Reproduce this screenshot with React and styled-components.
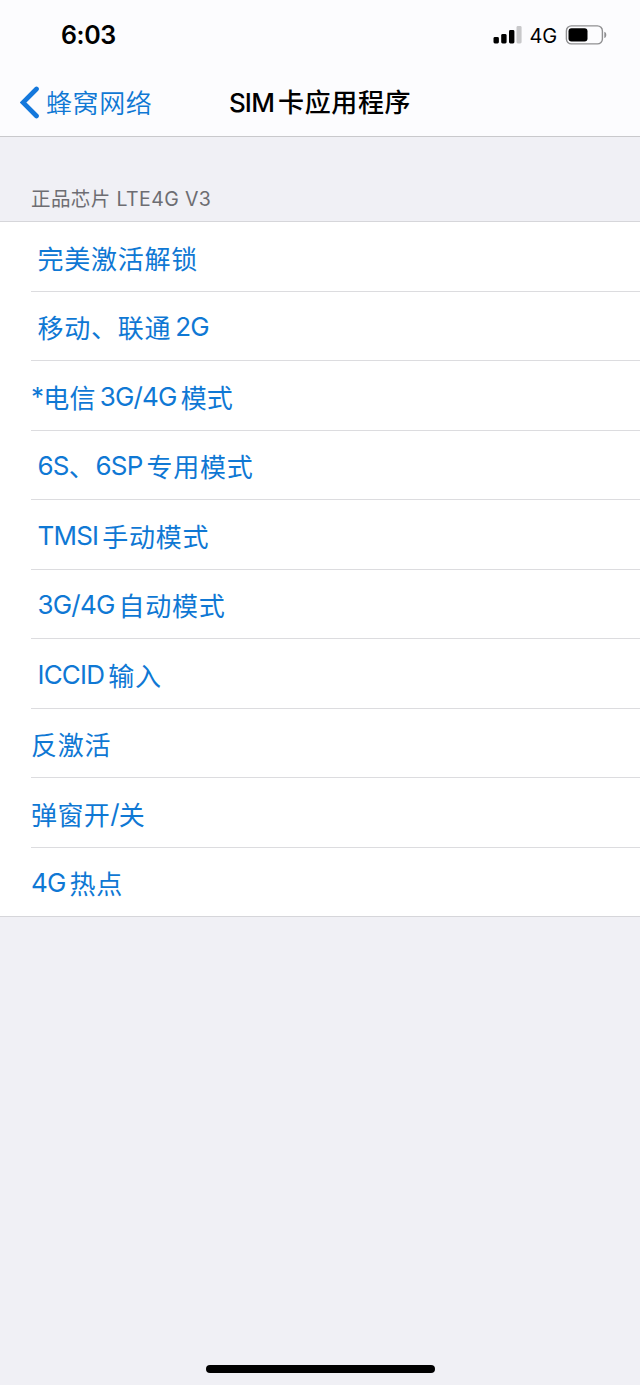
import React from 'react'
import styled, { createGlobalStyle } from 'styled-components'

const ITEMS = [
  { text: '完美激活解锁', indent: true },
  { text: '移动、联通2G', indent: true },
  { text: '*电信3G/4G模式', tracking: 0.2 },
  { text: '6S、6SP专用模式', indent: true },
  { text: 'TMSI手动模式', indent: true },
  { text: '3G/4G自动模式', indent: true },
  { text: 'ICCID输入', indent: true },
  { text: '反激活' },
  { text: '弹窗开/关', tracking: 0.4 },
  { text: '4G热点' },
]

// Latin runs get a little air next to Chinese characters
const MixedText = ({ children }) =>
  children
    .split(/([A-Z0-9*/]+)/)
    .filter(Boolean)
    .map((part, i, all) =>
      /^[A-Z0-9*/]/.test(part) ? (
        <Latin
          key={i}
          $before={i > 0 && /^[A-Z0-9]/.test(part) && !all[i - 1].endsWith('、')}
          $after={
            i < all.length - 1 &&
            /[A-Z0-9]$/.test(part) &&
            !all[i + 1].startsWith('、')
          }
        >
          {part}
        </Latin>
      ) : (
        <React.Fragment key={i}>{part}</React.Fragment>
      )
    )

const App = () => (
  <Screen>
    <GlobalStyle />
    <Header>
      <StatusBar>
        <Time>6:03</Time>
        <Status>
          <SignalIcon />
          <Network>4G</Network>
          <BatteryIcon />
        </Status>
      </StatusBar>
      <NavBar>
        <BackButton>
          <BackIcon />
          <BackLabel>蜂窝网络</BackLabel>
        </BackButton>
        <Title>
          <MixedText>SIM卡应用程序</MixedText>
        </Title>
      </NavBar>
    </Header>
    <SectionTitle>正品芯片 LTE4G V3</SectionTitle>
    <List>
      {ITEMS.map(({ text, indent, tracking }) => (
        <Row key={text} $indent={indent} $tracking={tracking}>
          <MixedText>{text}</MixedText>
        </Row>
      ))}
    </List>
    <Footer>
      <HomeIndicator />
    </Footer>
  </Screen>
)

const SignalIcon = () => (
  <svg width="29" height="20" viewBox="0 0 29 20">
    <rect x="0.5" y="12" width="5.4" height="6.5" rx="1.4" />
    <rect x="8.2" y="9" width="5.4" height="9.5" rx="1.4" />
    <rect x="16" y="5" width="5.4" height="13.5" rx="1.4" />
    <rect x="23.5" y="1" width="5.1" height="17.5" rx="1.4" fill="#c8c8ca" />
  </svg>
)

const BatteryIcon = () => (
  <svg width="42" height="20" viewBox="0 0 42 20">
    <rect
      x="1.4"
      y="0.9"
      width="36"
      height="18"
      rx="5"
      fill="none"
      stroke="#8f8f91"
      strokeWidth="1.4"
    />
    <rect x="3.500" y="3.2" width="19" height="13.4" rx="3" />
    <path d="M39.300 6.800c1.200.3 2 1.500 2 3.100s-.8 2.800-2 3.100z" fill="#8f8f91" />
  </svg>
)

const BackIcon = () => (
  <svg width="20" height="34" viewBox="0 0 20 34">
    <path
      d="M16.500 3 3 16.500l13.500 13.500"
      fill="none"
      stroke="#1478dc"
      strokeWidth="4.7"
      strokeLinecap="round"
      strokeLinejoin="miter"
    />
  </svg>
)

const GlobalStyle = createGlobalStyle`
  body {
    margin: 0;
    background-color: #f0f0f5;
  }
`

const Screen = styled.div`
  display: flex;
  flex-direction: column;
  box-sizing: border-box;
  width: 640px;
  height: 1385px;
  background-color: #f0f0f5;
  font-family: Inter, 'Noto Sans CJK SC', sans-serif;
  color: #000;
`

const Header = styled.header`
  box-sizing: border-box;
  height: 137px;
  background-color: #fcfcfe;
  border-bottom: 1px solid #c9c9cc;
`

const StatusBar = styled.div`
  display: flex;
  justify-content: space-between;
  align-items: center;
  height: 70px;
  padding: 0 33px 0 61px;
`

const Time = styled.span`
  font-size: 25px;
  font-weight: 600;
  letter-spacing: -0.4px;
`

const Status = styled.div`
  display: flex;
  align-items: center;
`

const Network = styled.span`
  margin: 1px 8px 0;
  font-size: 20px;
  letter-spacing: -0.2px;
`

const NavBar = styled.div`
  display: grid;
  grid-template-columns: 1fr auto 1fr;
  align-items: center;
  height: 66px;
  padding: 0 20px;
`

const BackButton = styled.div`
  display: flex;
  align-items: center;
  gap: 6px;
  color: #0f78d4;
`

const BackLabel = styled.span`
  padding-bottom: 4px;
  font-size: 26px;
  font-weight: 350;
  letter-spacing: 0.6px;
`

const Title = styled.h1`
  margin: 0;
  padding-bottom: 5px;
  font-size: 26px;
  font-weight: 500;
  letter-spacing: 0.6px;
  white-space: nowrap;
`

const Latin = styled.span`
  margin-left: ${({ $before }) => ($before ? 4 : 0)}px;
  margin-right: ${({ $after }) => ($after ? 4 : 0)}px;
  letter-spacing: -0.8px;
`

const SectionTitle = styled.h2`
  box-sizing: border-box;
  height: 84px;
  margin: 0;
  padding: 48px 0 0 31px;
  color: #6d6d72;
  font-size: 19.5px;
  font-weight: 400;
  line-height: 28px;
  letter-spacing: 0.4px;
`

const List = styled.div`
  display: flex;
  flex-direction: column;
  box-sizing: border-box;
  height: 696px;
  padding-left: 31px;
  background-color: #fff;
  border-top: 1px solid #d6d6da;
  border-bottom: 1px solid #d6d6da;
`

const Row = styled.div`
  display: flex;
  flex: 1;
  align-items: center;
  padding: 2px 0 0 ${({ $indent }) => ($indent ? 6.5 : 0)}px;
  color: #0f78d4;
  font-size: 26px;
  font-weight: 370;
  letter-spacing: ${({ $tracking = 0.75 }) => $tracking}px;
  white-space: nowrap;

  & + & {
    border-top: 1px solid #dcdcdf;
  }
`

const Footer = styled.footer`
  display: flex;
  flex: 1;
  justify-content: center;
  align-items: flex-end;
  padding-bottom: 12px;
`

const HomeIndicator = styled.div`
  width: 229px;
  height: 8px;
  border-radius: 4px;
  background-color: #000;
`

export default App
